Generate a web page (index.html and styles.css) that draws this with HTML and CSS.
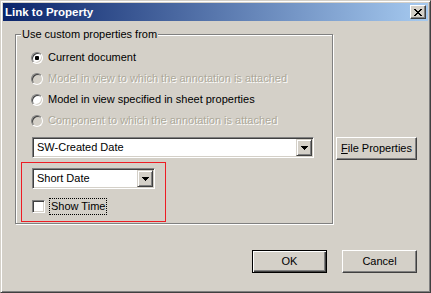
FILE: index.html
```html
<!DOCTYPE html>
<html>
<head>
<meta charset="utf-8">
<link rel="stylesheet" href="styles.css">
</head>
<body>
<div class="window">
  <div class="titlebar">
    <span class="title">Link to Property</span>
    <button class="close" aria-label="Close">
      <svg width="8" height="7" viewBox="0 0 8 7" shape-rendering="crispEdges"><path d="M0 0h2v1h-2z M6 0h2v1h-2z M1 1h2v1h-2z M5 1h2v1h-2z M2 2h4v1h-4z M3 3h2v1h-2z M2 4h4v1h-4z M1 5h2v1h-2z M5 5h2v1h-2z M0 6h2v1h-2z M6 6h2v1h-2z" fill="#000"/></svg>
    </button>
  </div>
  <div class="content">
    <div class="main">
      <fieldset class="group">
        <legend>Use custom properties from</legend>
        <div class="radios">
          <label class="opt"><span class="radio checked"></span><span>Current document</span></label>
          <label class="opt disabled"><span class="radio"></span><span>Model in view to which the annotation is attached</span></label>
          <label class="opt"><span class="radio"></span><span>Model in view specified in sheet properties</span></label>
          <label class="opt disabled"><span class="radio"></span><span>Component to which the annotation is attached</span></label>
        </div>
        <div class="combo wide">
          <span class="combo-text">SW-Created Date</span>
          <span class="combo-btn"><svg width="7" height="4" viewBox="0 0 7 4" shape-rendering="crispEdges"><path d="M0 0h7v1h-7z M1 1h5v1h-5z M2 2h3v1h-3z M3 3h1v1h-1z" fill="#000"/></svg></span>
        </div>
        <div class="highlight">
          <div class="combo short">
            <span class="combo-text">Short Date</span>
            <span class="combo-btn"><svg width="7" height="4" viewBox="0 0 7 4" shape-rendering="crispEdges"><path d="M0 0h7v1h-7z M1 1h5v1h-5z M2 2h3v1h-3z M3 3h1v1h-1z" fill="#000"/></svg></span>
          </div>
          <label class="check"><span class="box"></span><span class="focus">Show Time</span></label>
        </div>
      </fieldset>
      <div class="side">
        <button class="btn file"><u>F</u>ile Properties</button>
      </div>
    </div>
    <div class="actions">
      <button class="btn default">OK</button>
      <button class="btn">Cancel</button>
    </div>
  </div>
</div>
</body>
</html>
```
FILE: styles.css
```css
html, body {
  margin: 0;
  padding: 0;
  background: #d4d0c8;
}
body {
  font: 11px/13px "Liberation Sans", Arial, sans-serif;
  color: #000;
}
.window {
  width: 431px;
  height: 293px;
  box-sizing: border-box;
  border: 1px solid;
  border-color: #d4d0c8 #404040 #404040 #d4d0c8;
  box-shadow: inset 1px 1px #fff, inset -1px -1px #808080;
  padding: 2px;
  display: flex;
  flex-direction: column;
  background: #d4d0c8;
}
.titlebar {
  flex: none;
  height: 18px;
  display: flex;
  align-items: center;
  background: linear-gradient(to right, #0a246a, #a6caf0);
}
.title {
  flex: 1;
  color: #fff;
  font-weight: bold;
  font-size: 11.5px;
  padding-left: 2px;
}
.close {
  appearance: none;
  width: 16px;
  height: 14px;
  margin: 0 2px 0 0;
  padding: 0;
  box-sizing: border-box;
  background: #d4d0c8;
  border: 1px solid;
  border-color: #fff #404040 #404040 #fff;
  box-shadow: inset -1px -1px #808080;
  display: flex;
  align-items: center;
  justify-content: center;
}
.content {
  flex: 1;
  padding: 7px 11px 0 12px;
  display: flex;
  flex-direction: column;
}
.main {
  display: flex;
  align-items: flex-start;
}
.group {
  margin: 0;
  min-width: 0;
  width: 318px;
  box-sizing: border-box;
  border: 1px solid #808080;
  box-shadow: inset 1px 1px #fff, 1px 1px #fff;
  padding: 6px 0 1px 5px;
}
.group legend {
  padding: 0 1px;
  background: #d4d0c8;
  line-height: 13px;
}
.radios {
  margin-left: 10px;
}
.opt {
  display: flex;
  align-items: center;
  height: 21px;
  gap: 5px;
}
.opt.disabled {
  color: #aca899;
  text-shadow: 1px 1px #fff;
}
.radio {
  flex: none;
  width: 12px;
  height: 12px;
  box-sizing: border-box;
  border-radius: 50%;
  border: 1px solid;
  border-color: #808080 #fff #fff #808080;
  box-shadow: inset 1px 1px #404040, inset -1px -1px #d4d0c8;
  background: #fff;
  display: flex;
  align-items: center;
  justify-content: center;
}
.opt.disabled .radio {
  background: #d4d0c8;
}
.radio.checked::after {
  content: "";
  width: 4px;
  height: 4px;
  border-radius: 1px;
  background: #000;
}
.combo {
  display: flex;
  align-items: center;
  height: 21px;
  box-sizing: border-box;
  background: #fff;
  border: 1px solid;
  border-color: #808080 #fff #fff #808080;
  box-shadow: inset 1px 1px #404040, inset -1px -1px #d4d0c8;
  padding: 1px;
}
.combo.wide {
  width: 282px;
  margin: 6px 0 0 11px;
}
.combo.short {
  width: 123px;
}
.combo-text {
  flex: 1;
  padding-left: 3px;
  white-space: nowrap;
}
.combo-btn {
  flex: none;
  width: 16px;
  height: 17px;
  box-sizing: border-box;
  background: #d4d0c8;
  border: 1px solid;
  border-color: #d4d0c8 #404040 #404040 #d4d0c8;
  box-shadow: inset 1px 1px #fff, inset -1px -1px #808080;
  display: flex;
  align-items: center;
  justify-content: center;
}
.highlight {
  margin-top: 4px;
  width: 145px;
  box-sizing: border-box;
  border: 1px solid #ed1c24;
  padding: 5px 0 6px 10px;
}
.check {
  display: flex;
  align-items: center;
  height: 17px;
  margin-top: 9px;
  gap: 4px;
}
.box {
  flex: none;
  width: 13px;
  height: 13px;
  box-sizing: border-box;
  background: #fff;
  border: 1px solid;
  border-color: #808080 #fff #fff #808080;
  box-shadow: inset 1px 1px #404040, inset -1px -1px #d4d0c8;
}
.focus {
  border: 1px dotted #000;
  padding: 0 1px;
  line-height: 15px;
}
.side {
  margin: 109px 0 0 3px;
}
.btn {
  appearance: none;
  font: inherit;
  color: #000;
  margin: 0;
  padding: 0;
  height: 23px;
  width: 75px;
  box-sizing: border-box;
  background: #d4d0c8;
  border: 1px solid;
  border-color: #fff #404040 #404040 #fff;
  box-shadow: inset -1px -1px #808080;
  text-align: center;
}
.btn.file {
  width: 81px;
}
.btn.default {
  border: 1px solid #000;
  box-shadow: inset 1px 1px #fff, inset -1px -1px #404040, inset -2px -2px #808080;
}
.actions {
  display: flex;
  justify-content: flex-end;
  gap: 15px;
  margin-top: 26px;
}
```
